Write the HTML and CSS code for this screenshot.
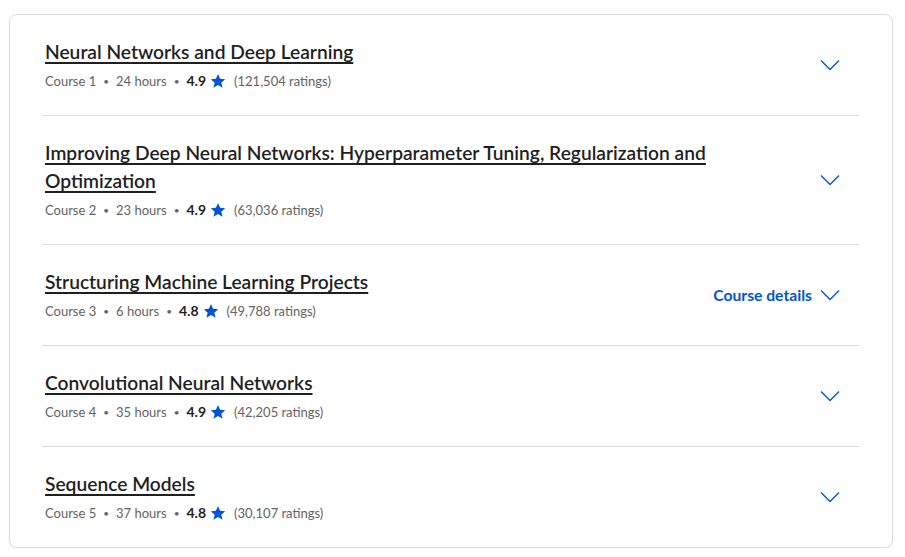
FILE: index.html
```html
<!DOCTYPE html>
<html lang="en">
<head>
<meta charset="utf-8">
<title>Courses</title>
<link rel="stylesheet" href="styles.css">
</head>
<body>
<div class="card">
  <div class="row">
    <div class="info">
      <a class="title" href="#">Neural Networks and Deep Learning</a>
      <div class="meta"><span>Course 1</span><span class="dot">•</span><span>24 hours</span><span class="dot">•</span><span class="rating">4.9</span><svg class="star" viewBox="0 0 24 24"><path d="M12 1.6l3.1 7.1 7.7.7-5.8 5.1 1.8 7.6L12 18.1l-6.8 4 1.8-7.6-5.8-5.1 7.7-.7z"/></svg><span class="count">(121,504 ratings)</span></div>
    </div>
    <div class="toggle"><svg class="chev" viewBox="0 0 20 12"><path d="M1 1.5l9 9 9-9"/></svg></div>
  </div>
  <div class="row">
    <div class="info">
      <a class="title" href="#">Improving Deep Neural Networks: Hyperparameter Tuning, Regularization and Optimization</a>
      <div class="meta"><span>Course 2</span><span class="dot">•</span><span>23 hours</span><span class="dot">•</span><span class="rating">4.9</span><svg class="star" viewBox="0 0 24 24"><path d="M12 1.6l3.1 7.1 7.7.7-5.8 5.1 1.8 7.6L12 18.1l-6.8 4 1.8-7.6-5.8-5.1 7.7-.7z"/></svg><span class="count">(63,036 ratings)</span></div>
    </div>
    <div class="toggle"><svg class="chev" viewBox="0 0 20 12"><path d="M1 1.5l9 9 9-9"/></svg></div>
  </div>
  <div class="row">
    <div class="info">
      <a class="title" href="#">Structuring Machine Learning Projects</a>
      <div class="meta"><span>Course 3</span><span class="dot">•</span><span>6 hours</span><span class="dot">•</span><span class="rating">4.8</span><svg class="star" viewBox="0 0 24 24"><path d="M12 1.6l3.1 7.1 7.7.7-5.8 5.1 1.8 7.6L12 18.1l-6.8 4 1.8-7.6-5.8-5.1 7.7-.7z"/></svg><span class="count">(49,788 ratings)</span></div>
    </div>
    <div class="toggle"><span class="details">Course details</span><svg class="chev" viewBox="0 0 20 12"><path d="M1 1.5l9 9 9-9"/></svg></div>
  </div>
  <div class="row">
    <div class="info">
      <a class="title" href="#">Convolutional Neural Networks</a>
      <div class="meta"><span>Course 4</span><span class="dot">•</span><span>35 hours</span><span class="dot">•</span><span class="rating">4.9</span><svg class="star" viewBox="0 0 24 24"><path d="M12 1.6l3.1 7.1 7.7.7-5.8 5.1 1.8 7.6L12 18.1l-6.8 4 1.8-7.6-5.8-5.1 7.7-.7z"/></svg><span class="count">(42,205 ratings)</span></div>
    </div>
    <div class="toggle"><svg class="chev" viewBox="0 0 20 12"><path d="M1 1.5l9 9 9-9"/></svg></div>
  </div>
  <div class="row">
    <div class="info">
      <a class="title" href="#">Sequence Models</a>
      <div class="meta"><span>Course 5</span><span class="dot">•</span><span>37 hours</span><span class="dot">•</span><span class="rating">4.8</span><svg class="star" viewBox="0 0 24 24"><path d="M12 1.6l3.1 7.1 7.7.7-5.8 5.1 1.8 7.6L12 18.1l-6.8 4 1.8-7.6-5.8-5.1 7.7-.7z"/></svg><span class="count">(30,107 ratings)</span></div>
    </div>
    <div class="toggle"><svg class="chev" viewBox="0 0 20 12"><path d="M1 1.5l9 9 9-9"/></svg></div>
  </div>
</div>
</body>
</html>
```
FILE: styles.css
```css
html, body {
  margin: 0;
  padding: 0;
  background: #ffffff;
}
body {
  font-family: Lato, "Liberation Sans", sans-serif;
  color: #1f1f1f;
}
.card {
  box-sizing: border-box;
  margin: 14px 0 0 9px;
  width: 884px;
  border: 1px solid #dcdcdc;
  border-radius: 8px;
  box-shadow: 0 1px 2px rgba(0,0,0,0.08);
  padding: 0 33px 0 32px;
}
.row {
  display: flex;
  align-items: center;
  padding: 23px 19px 24px 3px;
  border-bottom: 1px solid #dedede;
}
.row:last-child {
  border-bottom: none;
}
.info {
  flex: 1;
  min-width: 0;
  padding-right: 80px;
}
.title {
  display: block;
  font-size: 19.2px;
  line-height: 28px;
  font-weight: 600;
  color: #1f1f1f;
  text-decoration: underline;
  text-decoration-thickness: 1.6px;
  text-underline-offset: 3px;
}
.meta {
  margin-top: 5px;
  display: flex;
  align-items: center;
  font-size: 13px;
  line-height: 20px;
  color: #636363;
}
.dot {
  font-size: 10px;
  margin: 0 7px;
  color: #636363;
}
.rating {
  font-weight: 700;
  font-size: 14px;
  color: #1f1f1f;
}
.star {
  width: 16px;
  height: 16px;
  fill: #0056d2;
  margin: 0 8px 0 4px;
}
.count {
  font-size: 13px;
}
.toggle {
  display: flex;
  align-items: center;
  color: #0056d2;
}
.details {
  font-size: 15.7px;
  font-weight: 700;
  margin-right: 8px;
}
.chev {
  width: 20px;
  height: 12px;
  fill: none;
  stroke: #0056d2;
  stroke-width: 1.4;
}
```
